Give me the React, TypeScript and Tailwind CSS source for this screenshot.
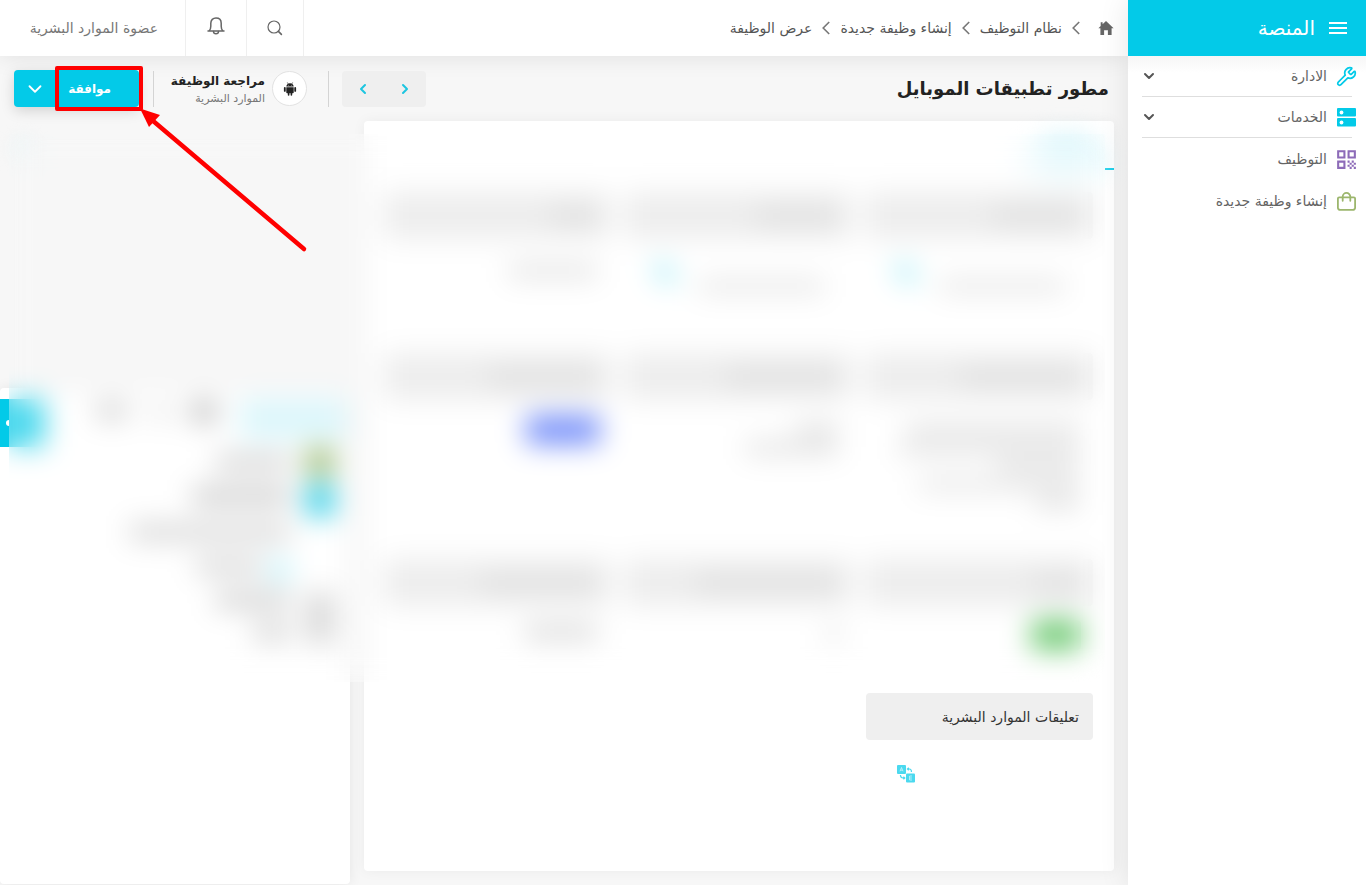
import React from 'react';
import { ChevronDown, ChevronLeft, ChevronRight, Wrench } from 'lucide-react';
import { MdQrCode } from 'react-icons/md';

const ServerIcon = () => (
  <svg viewBox="0 0 19 19" className="w-[19px] h-[19px]" aria-hidden="true">
    <rect x="0" y="0" width="19" height="8.5" rx="1" fill="#03cae8" />
    <rect x="0" y="10" width="19" height="8.5" rx="1" fill="#03cae8" />
    <circle cx="4.5" cy="4.5" r="1.9" fill="#fff" />
    <circle cx="4.5" cy="14.5" r="1.9" fill="#fff" />
  </svg>
);

const BagIcon = () => (
  <svg viewBox="0 0 19 19" className="w-[19px] h-[19px]" fill="none" stroke="#9cb66d" strokeWidth="1.8" strokeLinecap="round" aria-hidden="true">
    <path d="M2.2 5.3h14.6a1.3 1.3 0 0 1 1.3 1.3v9.1a2.2 2.2 0 0 1-2.2 2.2H3.1a2.2 2.2 0 0 1-2.2-2.2V6.6a1.3 1.3 0 0 1 1.3-1.3z" />
    <path d="M5.7 8.8V4.7a3.8 3.8 0 0 1 7.6 0v4.1" />
  </svg>
);

const HomeIcon = () => (
  <svg viewBox="0 0 16 15" className="w-4 h-[15px]" fill="#666" aria-hidden="true">
    <path d="M8 0 15.6 7.3H13.6V14H9.9V9.2H6.1V14H2.4V7.3H.4L2.7 5.1V1.3H4.6V3.3Z" />
  </svg>
);

const CrumbArrow = () => (
  <svg viewBox="0 0 8 14" className="w-2 h-[14px]" fill="none" stroke="#777" strokeWidth="1.6" aria-hidden="true">
    <path d="M7.2 1 1.2 7l6 6" />
  </svg>
);

const SearchIcon = () => (
  <svg viewBox="0 0 16 16" className="w-4 h-4" fill="none" stroke="#666" strokeWidth="1.2" strokeLinecap="round" aria-hidden="true">
    <circle cx="7" cy="7" r="6" />
    <path d="m11.4 11.4 3 3" strokeWidth="1.6" />
  </svg>
);

const BellIcon = () => (
  <svg viewBox="0 0 18 18" className="w-[18px] h-[18px] mb-1" fill="none" stroke="#666" strokeWidth="1.5" strokeLinejoin="round" strokeLinecap="round" aria-hidden="true">
    <path d="M1 14h16M2.2 13.8c1.200-1.200 1.600-2.500 1.600-4.600V6.200C3.800 3 6 1 9 1s5.200 2 5.200 5.200v3c0 2.100.4 3.400 1.600 4.600" />
    <path d="M6.500 14.400a2.500 2.300 0 0 0 5 0" />
  </svg>
);

const AndroidIcon = () => (
  <svg viewBox="0 0 14 14" className="w-[14px] h-[14px]" fill="#222" aria-hidden="true">
    <path d="M3.3 4.6C3.4 2.6 4.9 1.3 7 1.3s3.600 1.300 3.700 3.300z" />
    <path d="m4.3.4 1 1.7M9.700.4l-1 1.700" stroke="#222" strokeWidth=".6" />
    <path d="M3.3 5.2h7.4v5.3a.8.8 0 0 1-.8.8h-.7V13a.8.8 0 0 1-1.6 0v-1.7H6.4V13a.8.8 0 0 1-1.6 0v-1.700h-.7a.8.8 0 0 1-.8-.8z" />
    <rect x="0.9" y="5" width="1.8" height="4.8" rx=".9" />
    <rect x="11.300" y="5" width="1.8" height="4.8" rx=".9" />
    <circle cx="5.5" cy="3.2" r=".4" fill="#fff" />
    <circle cx="8.5" cy="3.2" r=".4" fill="#fff" />
  </svg>
);

const TranslateIcon = () => (
  <svg viewBox="0 0 18 18" className="w-[18px] h-[18px]" aria-hidden="true">
    <rect x="0" y="0" width="9" height="9" rx="1" fill="#4bd9ef" />
    <rect x="9" y="8.500" width="9" height="9" rx="1" fill="#4bd9ef" />
    <path d="m3 6.3 1.5-3.8L6 6.3M3.6 5.2h1.8M15 11h-2.4v4H15M12.6 13H15" fill="none" stroke="#dff8fc" strokeWidth=".7" />
    <path d="M10.5 4h1.800q2.200 0 2.200 3M11.800 2.700 10.400 4l1.400 1.300M7.700 13H6q-2.400 0-2.600-3M6.400 11.700 7.800 13l-1.400 1.300" fill="none" stroke="#4bd9ef" strokeWidth="1.2" />
  </svg>
);

const HamburgerIcon = () => (
  <svg viewBox="0 0 18 14" className="w-[18px] h-[14px]" stroke="#fff" strokeWidth="2" aria-hidden="true">
    <path d="M0 2h18M0 7h18M0 12h18" />
  </svg>
);

interface NavItem {
  label: string;
  icon: React.ReactNode;
  group?: boolean;
}

const navItems: NavItem[] = [
  { label: 'الادارة', icon: <Wrench className="shrink-0" size={21} strokeWidth={2} color="#03cae8" />, group: true },
  { label: 'الخدمات', icon: <ServerIcon />, group: true },
  { label: 'التوظيف', icon: <MdQrCode className="shrink-0" size={25} color="#8d6bb8" /> },
  { label: 'إنشاء وظيفة جديدة', icon: <BagIcon /> },
];

const crumbs = ['نظام التوظيف', 'إنشاء وظيفة جديدة', 'عرض الوظيفة'];

const Sidebar = () => (
  <aside className="w-[238px] shrink-0 bg-white shadow-[0_0_28px_rgba(0,0,0,0.1)] relative z-10">
    <div className="h-14 bg-[#03cae8] flex items-center gap-[14px] pr-[19px] text-white">
      <button aria-label="القائمة"><HamburgerIcon /></button>
      <span className="text-xl">المنصة</span>
    </div>
    <nav className="bg-linear-to-b from-[#f6f6f6] via-white via-10% to-white">
      <ul>
        {navItems.map((item) => (
          <li key={item.label}>
            <a
              href="#"
              className={`flex items-center gap-[10px] pr-[10px] pl-[14px] text-sm text-[#646464] ${item.group ? 'h-10' : 'h-[42px]'}`}
            >
              <span className="w-[19px] h-5 flex items-center justify-center">{item.icon}</span>
              <span className="flex-1">{item.label}</span>
              {item.group && <ChevronDown className="-ml-px" size={16} strokeWidth={3} color="#555" />}
            </a>
            {item.group && <hr className="mx-[14px] border-[#dedede]" />}
          </li>
        ))}
      </ul>
    </nav>
  </aside>
);

const Header = () => (
  <header className="h-14 bg-white flex items-stretch shadow-[0_0_24px_rgba(0,0,0,0.1)] relative">
    <nav className="flex items-center gap-[10px] pr-[14px] text-sm text-[#555]">
      <a href="#" aria-label="الرئيسية" className="ml-2"><HomeIcon /></a>
      {crumbs.map((crumb) => (
        <React.Fragment key={crumb}>
          <CrumbArrow />
          <a href="#">{crumb}</a>
        </React.Fragment>
      ))}
    </nav>
    <div className="flex-1" />
    <button aria-label="بحث" className="w-[58px] border-x border-[#efefef] flex items-center justify-center">
      <SearchIcon />
    </button>
    <button aria-label="التنبيهات" className="w-[61px] border-l border-[#efefef] flex items-center justify-center">
      <BellIcon />
    </button>
    <button className="w-[185px] pr-[27px] text-start text-sm text-[#777]">عضوة الموارد البشرية</button>
  </header>
);

/* Red frame round the approve button and the arrow that points at it */
const Callout = () => (
  <>
    <span className="absolute -inset-y-1 -right-1 left-0 border-4 border-[#f00] rounded-xs pointer-events-none z-20" />
    <svg className="absolute top-9 left-[82px] w-[172px] h-[148px] pointer-events-none z-20" viewBox="0 0 172 148" aria-hidden="true">
      <path d="M15 14 167 143" stroke="#f00" strokeWidth="4.5" strokeLinecap="round" />
      <path d="M3 2.500 23 9 12 21Z" fill="#f00" />
    </svg>
  </>
);

const Toolbar = () => (
  <div className="flex items-center justify-between h-[65px] pr-[19px] pl-[14px]">
    <h1 className="text-lg font-bold text-[#222]">مطور تطبيقات الموبايل</h1>
    <div className="flex items-center">
      <div className="flex w-[84px] h-9 bg-[#efefef] rounded-sm">
        <button aria-label="السابق" className="flex-1 flex items-center justify-center">
          <ChevronRight size={16} strokeWidth={3} color="#1cc5e0" />
        </button>
        <button aria-label="التالي" className="flex-1 flex items-center justify-center">
          <ChevronLeft size={16} strokeWidth={3} color="#1cc5e0" />
        </button>
      </div>
      <span className="w-px h-9 bg-[#d4d4d4] mr-[13px] ml-[21px]" />
      <span className="w-[35px] h-[35px] rounded-full bg-white border border-[#e2e2e2] flex items-center justify-center">
        <AndroidIcon />
      </span>
      <div className="mr-[7px] w-[98px] whitespace-nowrap">
        <p className="text-xs leading-5 font-bold text-[#222]">مراجعة الوظيفة</p>
        <p className="text-[11px] leading-4 text-[#777]">الموارد البشرية</p>
      </div>
      <span className="w-px h-9 bg-[#d4d4d4] mr-[13px] ml-[14px]" />
      <div className="flex h-[37px] rounded-sm bg-[#03cae8] text-white shadow-[0_4px_14px_rgba(0,0,0,0.15)]">
        <div className="relative w-[84px]">
          <button className="w-full h-full pr-7 text-start text-xs font-bold">موافقة</button>
          <Callout />
        </div>
        <button aria-label="خيارات أخرى" className="w-[41px] flex items-center justify-center">
          <ChevronDown size={22} strokeWidth={2} />
        </button>
      </div>
    </div>
  </div>
);

interface FieldProps {
  title: string;
  children?: React.ReactNode;
}

/* title holds the width class of the masked caption */
const MaskedField = ({ title, children }: FieldProps) => (
  <div>
    <div className="h-[47px] rounded-sm bg-[#ededed] px-[14px] flex items-center">
      <span className={`h-4 bg-[#dedede] ${title}`} />
    </div>
    {children}
  </div>
);

const TranslatedValue = () => (
  <div className="flex items-start justify-between pr-7 pl-[31px] pt-[25px]">
    <span className="w-[125px] h-3 mt-4 bg-[#e2e2e2]" />
    <TranslateIcon />
  </div>
);

const DetailsCard = () => (
  <section className="flex-1 mb-[14px] bg-white rounded-sm shadow-[0_0_13px_rgba(0,0,0,0.05)]">
    <div className="h-[49px] flex">
      <div className="w-[9px] border-b-2 border-[#03cae8]" />
      <div className="w-[76px] flex flex-col items-center justify-end blur-md">
        <span className="w-12 h-4 bg-[#dcf6fb]" />
        <span className="w-full h-5 bg-[#dcf6fb]" />
      </div>
    </div>
    <div className="pt-[22px] pr-[21px] pl-5">
      <div className="grid grid-cols-3 gap-x-[14px] h-[161px]">
        <MaskedField title="w-[86px]"><TranslatedValue /></MaskedField>
        <MaskedField title="w-[82px]"><TranslatedValue /></MaskedField>
        <MaskedField title="w-[46px]">
          <div className="mt-[26px] mr-[14px] w-[88px] h-3 bg-[#dcdcdc]" />
        </MaskedField>
      </div>
      <div className="grid grid-cols-3 gap-x-[14px] h-[206px]">
        <MaskedField title="w-[118px]">
          <div className="mt-6 mr-[14px] space-y-[6px]">
            <div className="w-[172px] h-3 bg-[#e0e0e0]" />
            <div className="w-[180px] h-3 bg-[#e0e0e0]" />
            <div className="w-[82px] h-3 bg-[#e0e0e0]" />
            <div className="w-[160px] h-3 bg-[#e2e2e2]" />
            <div className="w-[44px] h-3 bg-[#dcdcdc]" />
          </div>
        </MaskedField>
        <MaskedField title="w-[112px]">
          <div className="mt-6 mr-[14px] space-y-[6px]">
            <div className="w-[42px] h-3 bg-[#dcdcdc]" />
            <div className="w-[92px] h-3 bg-[#dcdcdc]" />
          </div>
        </MaskedField>
        <MaskedField title="w-[108px]">
          <div className="mt-4 mr-[11px] w-[74px] h-7 rounded-sm bg-[#728cf9]" />
        </MaskedField>
      </div>
      <div className="grid grid-cols-3 gap-x-[14px] h-[134px]">
        <MaskedField title="w-[46px]">
          <div className="mt-[14px] mr-3 w-[50px] h-[30px] rounded-sm bg-[#70ca74]" />
        </MaskedField>
        <MaskedField title="w-[142px]">
          <div className="mt-[22px] mr-[14px] w-2 h-3 bg-[#c4c4c4]" />
        </MaskedField>
        <MaskedField title="w-[116px]">
          <div className="mt-5 mr-[14px] w-[72px] h-3 bg-[#cecece]" />
        </MaskedField>
      </div>
      <div className="grid grid-cols-3 gap-x-[14px]">
        <div>
          <h2 className="h-[47px] px-[14px] flex items-center rounded-sm bg-[#efefef] text-sm text-[#333]">
            تعليقات الموارد البشرية
          </h2>
          <div className="flex justify-end pl-[31px] pt-[25px]">
            <button aria-label="ترجمة"><TranslateIcon /></button>
          </div>
        </div>
      </div>
    </div>
  </section>
);

const ActivityPanel = () => (
  <aside className="w-[350px] shrink-0 flex flex-col">
    <div className="h-[267px] flex justify-end pt-4 pl-3">
      <span className="w-6 h-6 rounded-full bg-[#edf5f6] blur-sm" />
    </div>
    <div className="flex-1 mb-px bg-white rounded-sm shadow-[0_0_13px_rgba(0,0,0,0.08)]">
      <div className="h-[60px] pt-[11px] flex items-start">
        <span className="w-[106px] h-10 mr-1 bg-[#dbf6fb]" />
        <span className="w-6 h-5 mt-[3px] mr-6 bg-[#b8b8b8]" />
        <span className="w-5 h-3 mt-2 mr-5 bg-[#dedede]" />
        <span className="w-8 h-4 mt-1 mr-6 bg-[#d0d0d0]" />
        <button aria-label="إضافة" className="w-[45px] h-12 mr-auto bg-[#03cae8] flex items-center">
          <span className="flex-1 h-full bg-[#4bd8ed]" />
          <span className="w-[9px] flex justify-start">
            <span className="w-[3px] h-[6px] rounded-r-none rounded-l-full bg-white" />
          </span>
        </button>
      </div>
      <div className="flex pr-4">
        <div className="w-7 space-y-2">
          <div className="h-7 bg-[#a0bc78]" />
          <div className="h-8 bg-[#35cde5]" />
        </div>
        <div className="mr-4 mt-2 flex-1 space-y-5">
          <div className="w-[74px] h-3 bg-[#c4c4c4]" />
          <div className="w-[98px] h-4 bg-[#c8c8c8]" />
          <div className="w-[160px] h-4 bg-[#d4d4d4]" />
          <div className="flex gap-2">
            <div className="w-5 h-5 bg-[#b9eff8]" />
            <div className="w-[66px] h-3 bg-[#c8c8c8]" />
          </div>
        </div>
      </div>
      <div className="flex pr-4 pt-3">
        <div className="w-7 h-[52px] bg-[#d8d8d8]" />
        <div className="mr-4 space-y-4">
          <div className="w-[74px] h-4 bg-[#cecece]" />
          <div className="w-9 h-4 bg-[#d0d0d0]" />
        </div>
      </div>
    </div>
  </aside>
);

export default function App() {
  return (
    <div dir="rtl" lang="ar" className="min-h-screen flex bg-[#f7f7f7] overflow-hidden font-['DejaVu_Sans','Noto_Sans',sans-serif]">
      <Sidebar />
      <div className="flex-1 min-w-0 flex flex-col">
        <Header />
        <main className="relative flex-1 flex flex-col">
          <Toolbar />
          <div className="flex-1 flex gap-[14px] pr-[14px]">
            <DetailsCard />
            <ActivityPanel />
          </div>
          {/* private details stay out of focus behind this pane */}
          <div className="absolute top-[78px] left-[9px] right-[23px] h-[548px] backdrop-blur-[14px]" />
        </main>
      </div>
    </div>
  );
}
